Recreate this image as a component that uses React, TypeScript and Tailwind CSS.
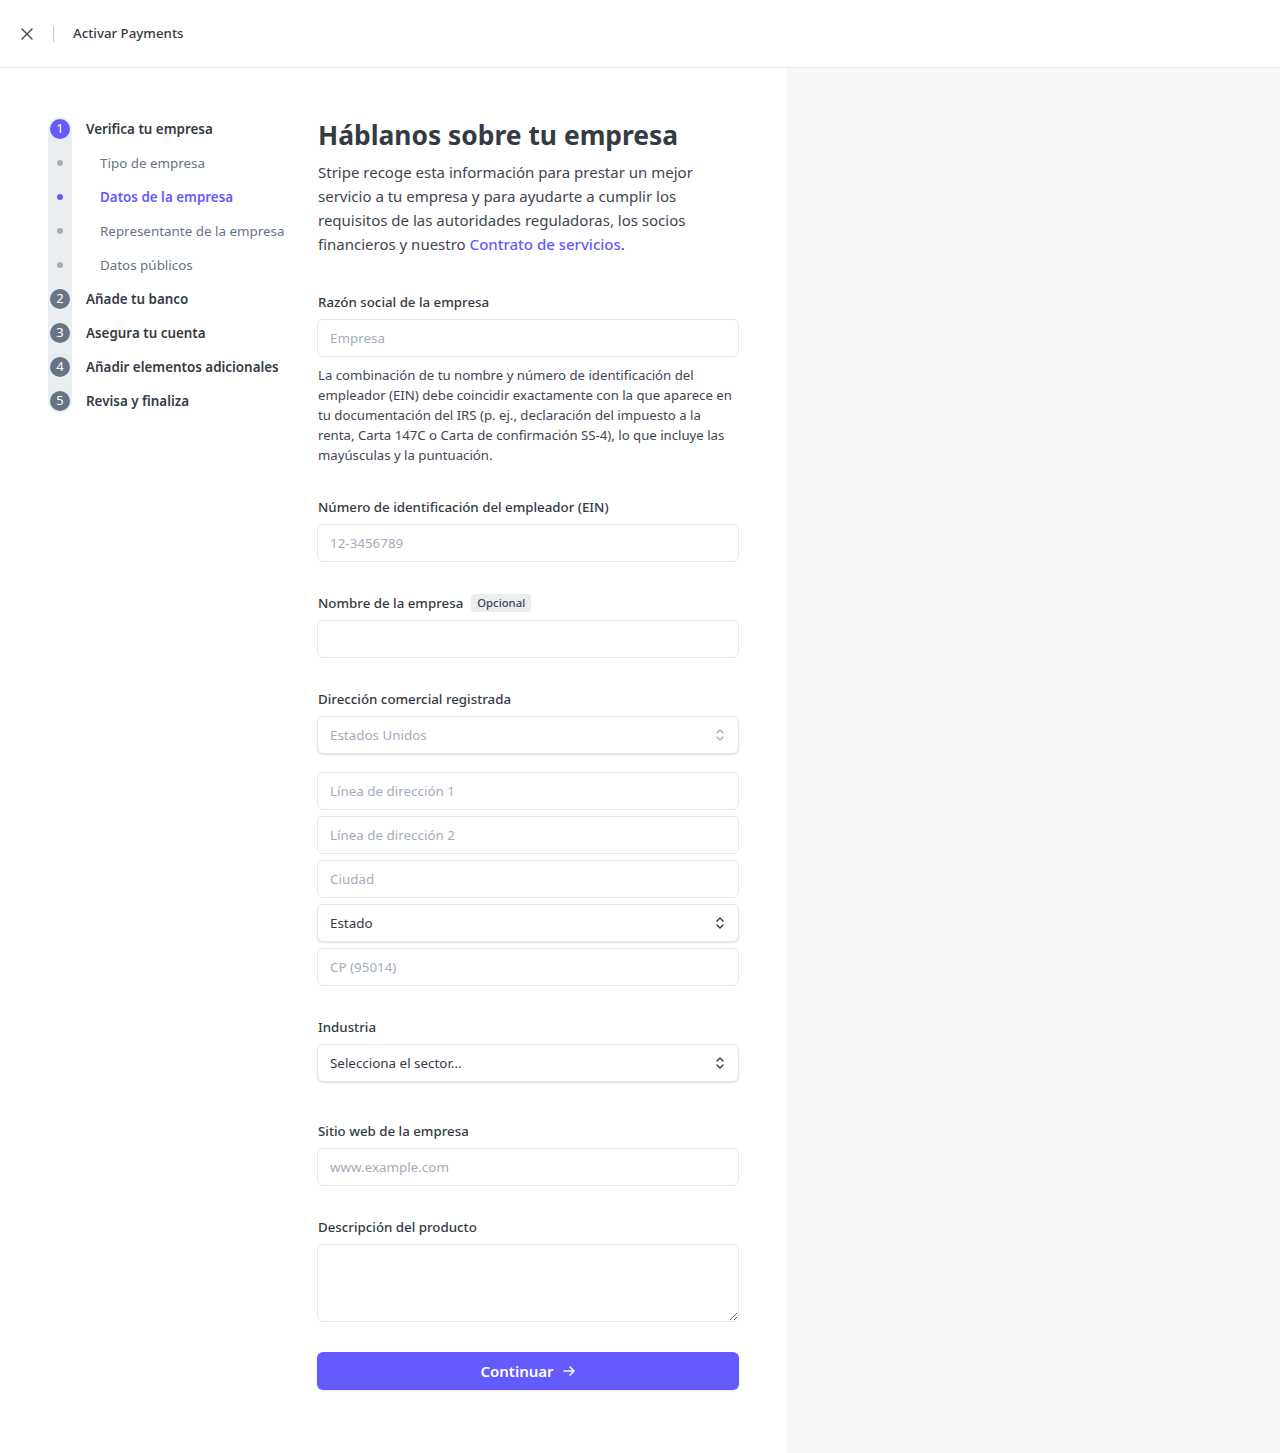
import React from 'react';

const font = { fontFamily: '"Noto Sans", "Open Sans", sans-serif' };

const Chevrons = ({ muted }: { muted?: boolean }) => (
  <svg width="12" height="16" viewBox="0 0 12 16" fill="none" className={muted ? 'text-[#a3acba]' : 'text-[#353a44]'}>
    <path d="M3 6l3-3 3 3M3 10l3 3 3-3" stroke="currentColor" strokeWidth="1.4" strokeLinecap="round" strokeLinejoin="round" />
  </svg>
);

const inputCls =
  'w-full h-[38px] px-3 rounded-md border border-[#e3e6ea] bg-white text-[13.4px] text-[#353a44] placeholder:text-[#a3acba] outline-none';

const Label = ({ children }: { children: React.ReactNode }) => (
  <label className="block pl-[1px] text-[13.3px] leading-5 font-medium text-[#353a44] mb-[7px]">{children}</label>
);

const Select = ({ value, muted }: { value: string; muted?: boolean }) => (
  <div className="w-full h-[38px] px-3 rounded-md border border-[#e3e6ea] bg-white shadow-[0_1px_2px_rgba(0,0,0,0.12)] flex items-center justify-between">
    <span className={`text-[13.4px] ${muted ? 'text-[#a3acba]' : 'text-[#353a44]'}`}>{value}</span>
    <Chevrons muted={muted} />
  </div>
);

const steps = [
  { n: '1', label: 'Verifica tu empresa', active: true },
  { sub: 'Tipo de empresa' },
  { sub: 'Datos de la empresa', current: true },
  { sub: 'Representante de la empresa' },
  { sub: 'Datos públicos' },
  { n: '2', label: 'Añade tu banco' },
  { n: '3', label: 'Asegura tu cuenta' },
  { n: '4', label: 'Añadir elementos adicionales' },
  { n: '5', label: 'Revisa y finaliza' },
];

export default function App() {
  return (
    <div style={font} className="min-h-[1453px] bg-white text-[#353a44]">
      <header className="h-[68px] border-b border-[#ebeef1] flex items-center pl-5">
        <svg width="12" height="12" viewBox="0 0 12 12" className="ml-[1px]">
          <path d="M1 1l10 10M11 1L1 11" stroke="#414552" strokeWidth="1.4" strokeLinecap="round" />
        </svg>
        <div className="w-px h-4 bg-[#c0c8d2] ml-[20px]" />
        <span className="ml-[19px] text-[13.3px] font-medium text-[#353a44]">Activar Payments</span>
      </header>

      <div className="flex">
        <div className="w-[786px] flex pl-12 pt-[49px] pb-16">
          <nav className="w-[270px] flex shrink-0">
            <div className="w-6 rounded-full bg-[#ebeef1] flex flex-col gap-[10px] self-start">
              {steps.map((s, i) => (
                <div key={i} className="h-6 flex items-center justify-center">
                  {s.n ? (
                    <span
                      className={`w-5 h-5 rounded-full flex items-center justify-center text-[13px] text-white ${
                        s.active ? 'bg-[#635bff]' : 'bg-[#687385]'
                      }`}
                    >
                      {s.n}
                    </span>
                  ) : (
                    <span className={`w-[6px] h-[6px] rounded-full ${s.current ? 'bg-[#635bff]' : 'bg-[#a3acba]'}`} />
                  )}
                </div>
              ))}
            </div>
            <div className="flex flex-col gap-[10px] ml-[14px]">
              {steps.map((s, i) => (
                <div key={i} className="h-6 flex items-center">
                  {s.n ? (
                    <span className="text-[13.4px] font-semibold text-[#353a44]">{s.label}</span>
                  ) : (
                    <span
                      className={`ml-[14px] text-[13.4px] ${
                        s.current ? 'font-semibold text-[#635bff]' : 'text-[#687385]'
                      }`}
                    >
                      {s.sub}
                    </span>
                  )}
                </div>
              ))}
            </div>
          </nav>

          <main className="w-[422px] -ml-[1px]">
            <h1 className="text-[26.4px] leading-9 font-bold text-[#353a44] pl-[1px]">Háblanos sobre tu empresa</h1>
            <p className="mt-[7px] text-[15px] leading-6 text-[#414552] pl-[1px]">
              Stripe recoge esta información para prestar un mejor servicio a tu empresa y para ayudarte a cumplir los
              requisitos de las autoridades reguladoras, los socios financieros y nuestro{' '}
              <span className="text-[#635bff] font-medium">Contrato de servicios</span>.
            </p>

            <div className="mt-[36px]">
              <Label>Razón social de la empresa</Label>
              <input className={inputCls} placeholder="Empresa" />
              <p className="mt-2 text-[13.2px] leading-5 text-[#414552] pl-[1px] pr-[5px]">
                La combinación de tu nombre y número de identificación del empleador (EIN) debe coincidir exactamente con
                la que aparece en tu documentación del IRS (p. ej., declaración del impuesto a la renta, Carta 147C o
                Carta de confirmación SS-4), lo que incluye las mayúsculas y la puntuación.
              </p>
            </div>

            <div className="mt-8">
              <Label>Número de identificación del empleador (EIN)</Label>
              <input className={inputCls} placeholder="12-3456789" />
            </div>

            <div className="mt-[31px]">
              <div className="flex items-center gap-2 mb-[7px] pl-[1px] h-5">
                <span className="text-[13.3px] leading-5 font-medium text-[#353a44]">Nombre de la empresa</span>
                <span className="px-[6px] rounded bg-[#ebeef1] text-[11.3px] leading-[18px] font-medium text-[#414552]">
                  Opcional
                </span>
              </div>
              <input className={inputCls} />
            </div>

            <div className="mt-[31px]">
              <Label>Dirección comercial registrada</Label>
              <Select value="Estados Unidos" muted />
              <div className="mt-[18px] flex flex-col gap-[6px]">
                <input className={inputCls} placeholder="Línea de dirección 1" />
                <input className={inputCls} placeholder="Línea de dirección 2" />
                <input className={inputCls} placeholder="Ciudad" />
                <Select value="Estado" />
                <input className={inputCls} placeholder="CP (95014)" />
              </div>
            </div>

            <div className="mt-[31px]">
              <Label>Industria</Label>
              <Select value="Selecciona el sector..." />
            </div>

            <div className="mt-[39px]">
              <Label>Sitio web de la empresa</Label>
              <input className={inputCls} placeholder="www.example.com" />
            </div>

            <div className="mt-[31px]">
              <Label>Descripción del producto</Label>
              <textarea className="block w-full h-[78px] px-3 py-2 rounded-md border border-[#e3e6ea] bg-white text-[14px] outline-none" />
            </div>

            <button className="mt-[30px] w-full h-[38px] rounded-md bg-[#635bff] text-white text-[15px] font-semibold flex items-center justify-center gap-2 shadow-[0_1px_2px_rgba(0,0,0,0.1)]">
              Continuar
              <svg width="14" height="14" viewBox="0 0 14 14" fill="none">
                <path d="M2 7h10M8 3l4 4-4 4" stroke="white" strokeWidth="1.5" strokeLinecap="round" strokeLinejoin="round" />
              </svg>
            </button>
          </main>
        </div>
        <aside className="flex-1 bg-[#f6f8fa] min-h-[1385px]" />
      </div>
    </div>
  );
}
